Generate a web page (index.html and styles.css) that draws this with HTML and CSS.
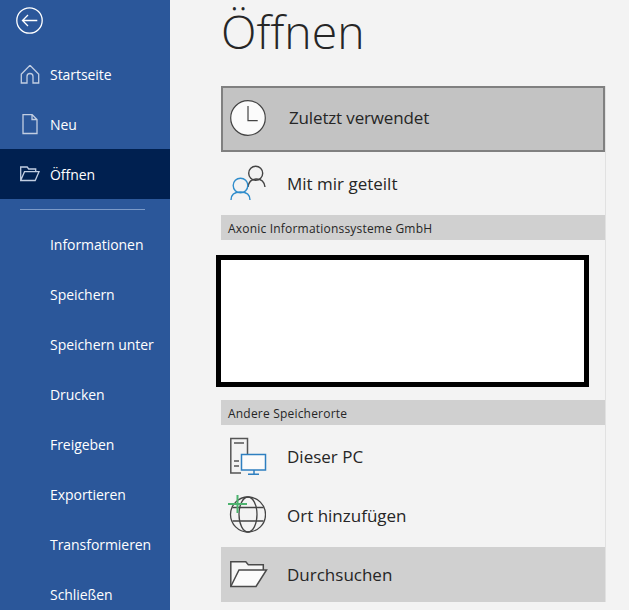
FILE: index.html
```html
<!DOCTYPE html>
<html lang="de">
<head>
<meta charset="utf-8">
<title>Öffnen</title>
<link rel="stylesheet" href="styles.css">
</head>
<body>
<div class="app">
  <nav class="side">
    <div class="back">
      <svg width="27" height="27" viewBox="0 0 27 27" fill="none" stroke="#fff" stroke-width="1.300"><circle cx="13.500" cy="13.500" r="12.700"/><path d="M21.300 13.500H6.500M12 8l-5.500 5.500L12 19"/></svg>
    </div>
    <div class="nav-item">
      <svg class="nav-icon" width="20" height="20" viewBox="0 1 20 20" fill="none" stroke="#c2cee2" stroke-width="1.300"><path d="M1 10.500 10 1.300l9 9.200M1.300 10v9h5.700v-6.500q0-3 3-3t3 3V19h5.700v-9"/></svg>
      <span>Startseite</span>
    </div>
    <div class="nav-item">
      <svg class="nav-icon" width="20" height="22" viewBox="0 1 20 22" fill="none" stroke="#c2cee2" stroke-width="1.300"><path d="M3 1.500h9l5 5v14H3zM12 1.500v5h5"/></svg>
      <span>Neu</span>
    </div>
    <div class="nav-item active">
      <svg class="nav-icon" width="20" height="18" viewBox="0 0 20 18" fill="none" stroke="#c2cee2" stroke-width="1.300"><path d="M.7 15.500V2h6.500l1.500 2h7v2.700M.7 15.500h14.500L19 6.700H4.500z"/></svg>
      <span>Öffnen</span>
    </div>
    <div class="sep"></div>
    <div class="nav-item"><span>Informationen</span></div>
    <div class="nav-item"><span>Speichern</span></div>
    <div class="nav-item"><span>Speichern unter</span></div>
    <div class="nav-item"><span>Drucken</span></div>
    <div class="nav-item"><span>Freigeben</span></div>
    <div class="nav-item"><span>Exportieren</span></div>
    <div class="nav-item"><span>Transformieren</span></div>
    <div class="nav-item"><span>Schließen</span></div>
  </nav>
  <main class="main">
    <h1 class="title">Öffnen</h1>
    <div class="list">
      <div class="row recent">
        <svg class="row-icon" width="36" height="36" viewBox="0 0 36 36" fill="none" stroke="#444" stroke-width="1.200"><circle cx="18" cy="18" r="17.300" fill="#fbfbfb"/><path d="M18 6v14.700h9.700"/></svg>
        <span>Zuletzt verwendet</span>
      </div>
      <div class="row shared">
        <svg class="row-icon" width="38" height="38" viewBox="0 0 38 38" fill="none" stroke-width="1.400"><g stroke="#444"><circle cx="25.700" cy="8.300" r="7"/><path d="M18 22q1-8 8.500-8t8.500 8"/></g><g stroke="#2e8ccb"><circle cx="10.500" cy="20.500" r="7.300" fill="#f3f3f3"/><path d="M1 35q0-8 9.500-8t9.500 8"/></g></svg>
        <span>Mit mir geteilt</span>
      </div>
      <div class="head">Axonic Informationssysteme GmbH</div>
      <div class="redact"></div>
      <div class="head">Andere Speicherorte</div>
      <div class="row pc">
        <svg class="row-icon" width="38" height="38" viewBox="0 0 38 38" fill="none" stroke-width="1.500"><path stroke="#555" d="M11 36H.8V1.500h16.700V17M4 6h10M4 24h5M4 29h5"/><rect x="11.500" y="17.500" width="24" height="15.500" fill="#fbfbfb" stroke="#2e7fc0"/><path stroke="#2e7fc0" d="M24 33v4M18 37.200h11"/></svg>
        <span>Dieser PC</span>
      </div>
      <div class="row add">
        <svg class="row-icon" width="38" height="38" viewBox="0 0 38 38" fill="none" stroke="#444" stroke-width="1.300"><circle cx="20" cy="19.500" r="17.500"/><ellipse cx="20" cy="19.500" rx="9" ry="17.500"/><path d="M4.500 12.500h31M4.500 26h31"/><path stroke="#4cb36e" stroke-width="2" d="M9.500 0v18M0 9h19"/></svg>
        <span>Ort hinzufügen</span>
      </div>
      <div class="row browse">
        <svg class="row-icon" width="38" height="27" viewBox="0 0 38 27" fill="none" stroke="#4a4a4a" stroke-width="1.500"><path d="M.8 25.500V.8h15l2.500 3h15v5.200" fill="#f6f6f6"/><path d="M.8 25.500H26L36.500 9H9z" fill="#fbfbfb"/></svg>
        <span>Durchsuchen</span>
      </div>
    </div>
  </main>
</div>
</body>
</html>
```
FILE: styles.css
```css
* { box-sizing: border-box; }
html, body { margin: 0; height: 100%; overflow: hidden; }
body { font-family: "Open Sans", "Noto Sans", "Liberation Sans", sans-serif; background: #f3f3f3; }
.app { display: flex; height: 610px; }
.side { width: 170px; flex: none; background: #2b579a; color: #fff; font-size: 14px; }
.back { height: 50px; padding: 7px 0 0 16px; }
.back svg { display: block; }
.nav-item { height: 50px; display: flex; align-items: center; position: relative; }
.nav-item span { margin-left: 50px; padding-bottom: 2px; letter-spacing: -.05px; }
.nav-item.active { background: #002050; margin-top: -1px; }
.nav-item.active span { padding-bottom: 0; }
.nav-icon { position: absolute; left: 20px; top: 50%; transform: translateY(-50%); }
.sep { height: 1px; background: #7b9ac8; margin: 10px 25px 10px 20px; }
.main { flex: 1; padding-left: 51px; min-width: 0; }
.title { margin: 0; height: 86px; font-weight: 300; font-size: 46.4px; line-height: 62px; color: #262626; }
.list { width: 385px; border-right: 1px solid #e1e1e1; color: #262626; font-size: 17px; }
.row { display: flex; align-items: center; }
.row-icon { flex: none; }
.recent { height: 66px; background: #c3c3c3; border: 2px solid #808080; padding-left: 7px; }
.recent .row-icon { margin-top: -2px; }
.recent span { margin-left: 23px; padding-bottom: 4px; letter-spacing: -.15px; }
.shared { height: 63px; padding-left: 9px; }
.shared span { margin-left: 19px; }
.head { height: 25px; background: #d0d0d0; font-size: 12px; line-height: 27px; padding-left: 7px; letter-spacing: .2px; }
.redact { width: 373px; height: 132px; margin: 15px 0 13px -5px; background: #fff; border: 5px solid #000; }
.pc { height: 61px; padding-left: 9px; }
.pc span { margin-left: 19px; padding-top: 2px; }
.add { height: 61px; padding-left: 7px; }
.add .row-icon { margin-top: -5px; }
.add span { margin-left: 21px; padding-bottom: 2px; }
.browse { height: 55px; background: #d0d0d0; padding-left: 9px; }
.browse span { margin-left: 19px; }
```
